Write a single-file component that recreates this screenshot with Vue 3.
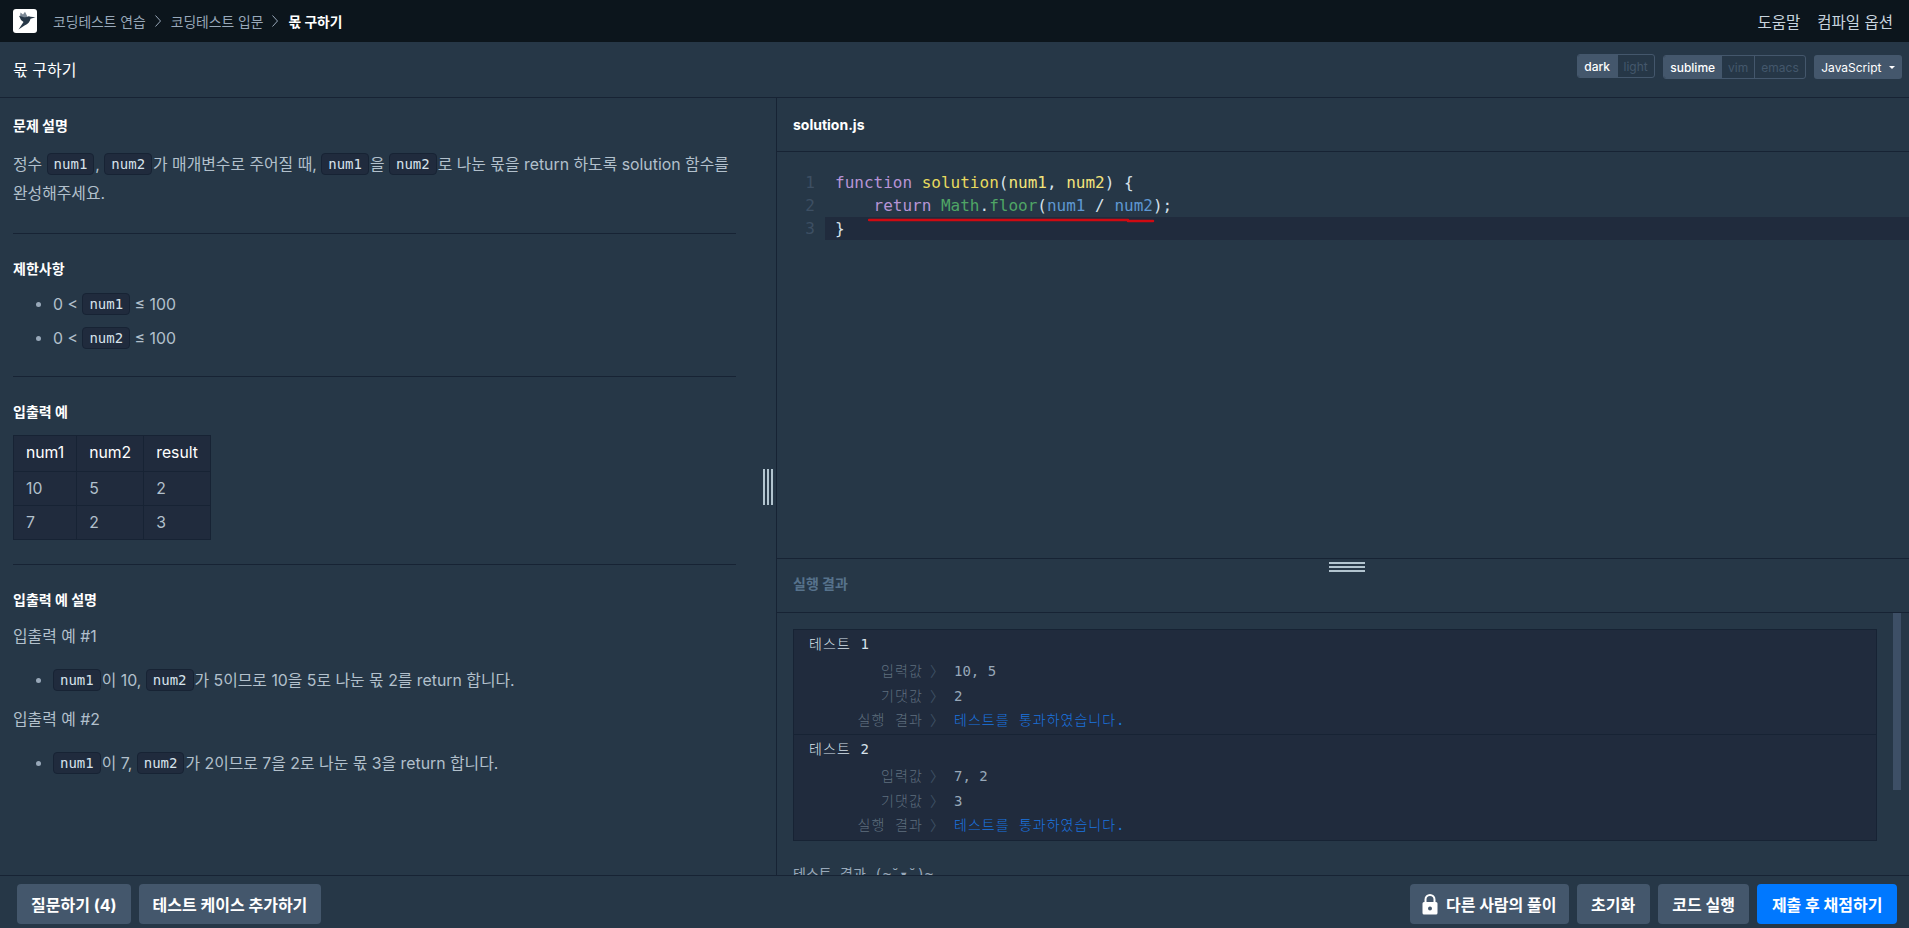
<script setup>
const tests = [
  { name: '테스트 1', input: '10, 5', expected: '2' },
  { name: '테스트 2', input: '7, 2', expected: '3' }
]
</script>

<template>
  <div class="page">
    <header class="topbar">
      <div class="crumbs">
        <span class="logo">
          <svg width="24" height="24" viewBox="0 0 24 24">
            <rect width="24" height="24" rx="3" fill="#fff" />
            <path d="M7 7.500L7.500 3.500 10 5.500 12 2.800 14.500 7.800 11 9z" fill="#7a8794" />
            <path d="M22.500 8.300L17.500 7.800C16.500 6.800 15 7 14 8L11 8.200 6 6.800 8 11 10.500 13 5.500 20.500 11.500 16.500C15 15.500 17 12.500 17.500 9.800z" fill="#263747" />
          </svg>
        </span>
        <span class="crumb">코딩테스트 연습</span>
        <svg class="sep" width="6" height="12" viewBox="0 0 6 12"><path d="M.5.500l5 5.500-5 5.500" fill="none" stroke="#98a8b9" /></svg>
        <span class="crumb">코딩테스트 입문</span>
        <svg class="sep" width="6" height="12" viewBox="0 0 6 12"><path d="M.5.500l5 5.500-5 5.500" fill="none" stroke="#98a8b9" /></svg>
        <span class="crumb current">몫 구하기</span>
      </div>
      <nav class="toplinks">
        <span>도움말</span>
        <span>컴파일 옵션</span>
      </nav>
    </header>

    <div class="titlebar">
      <h1>몫 구하기</h1>
      <div class="settings">
        <div class="seg theme">
          <span class="on">dark</span><span>light</span>
        </div>
        <div class="seg keys">
          <span class="on">sublime</span><span>vim</span><span>emacs</span>
        </div>
        <div class="lang">JavaScript<i class="caret"></i></div>
      </div>
    </div>

    <main class="workspace">
      <section class="desc">
        <h2>문제 설명</h2>
        <p class="intro">정수 <code>num1</code>, <code>num2</code>가 매개변수로 주어질 때, <code>num1</code>을 <code>num2</code>로 나눈 몫을 return 하도록 solution 함수를 완성해주세요.</p>
        <hr />
        <h2>제한사항</h2>
        <ul class="limits">
          <li>0 &lt; <code>num1</code> ≤ 100</li>
          <li>0 &lt; <code>num2</code> ≤ 100</li>
        </ul>
        <hr />
        <h2>입출력 예</h2>
        <table>
          <thead><tr><th>num1</th><th>num2</th><th>result</th></tr></thead>
          <tbody>
            <tr><td>10</td><td>5</td><td>2</td></tr>
            <tr><td>7</td><td>2</td><td>3</td></tr>
          </tbody>
        </table>
        <hr />
        <h2>입출력 예 설명</h2>
        <p class="ex">입출력 예 #1</p>
        <ul class="exlist">
          <li><code>num1</code>이 10, <code>num2</code>가 5이므로 10을 5로 나눈 몫 2를 return 합니다.</li>
        </ul>
        <p class="ex">입출력 예 #2</p>
        <ul class="exlist">
          <li><code>num1</code>이 7, <code>num2</code>가 2이므로 7을 2로 나눈 몫 3을 return 합니다.</li>
        </ul>
        <div class="vhandle"></div>
      </section>

      <section class="right">
        <div class="filebar">solution.js</div>
        <div class="editor">
          <div class="line"><span class="no">1</span><span class="src"><span class="kw">function</span> <span class="fn">solution</span>(<span class="arg">num1</span>, <span class="arg">num2</span>) {</span></div>
          <div class="line"><span class="no">2</span><span class="src">{{ '    ' }}<span class="kw">return</span> <span class="cls">Math</span>.<span class="cls">floor</span>(<span class="var">num1</span> / <span class="var">num2</span>);</span></div>
          <div class="line active"><span class="no">3</span><span class="src">}</span></div>
          <svg class="scribble" width="290" height="8" viewBox="0 0 290 8"><path d="M1 2H260M260 3H285" stroke="#cf0a12" stroke-width="2.500" stroke-linecap="round" fill="none" /></svg>
        </div>
        <div class="results">
          <div class="hhandle"></div>
          <div class="resulthead">실행 결과</div>
          <div class="output">
            <div class="testbox">
              <div v-for="t in tests" :key="t.name" class="test">
                <div class="testname">{{ t.name }}</div>
                <div class="row"><span class="lbl">입력값</span><span class="gt">〉</span><span class="val">{{ t.input }}</span></div>
                <div class="row"><span class="lbl">기댓값</span><span class="gt">〉</span><span class="val">{{ t.expected }}</span></div>
                <div class="row"><span class="lbl">실행 결과</span><span class="gt">〉</span><span class="pass">테스트를 통과하였습니다.</span></div>
              </div>
            </div>
            <div class="summary">테스트 결과 (~˘▾˘)~</div>
            <div class="scrollthumb"></div>
          </div>
        </div>
      </section>
    </main>

    <footer class="actions">
      <div class="group">
        <button>질문하기 (4)</button>
        <button>테스트 케이스 추가하기</button>
      </div>
      <div class="group endgroup">
        <button class="withicon">
          <svg width="16" height="21" viewBox="0 0 16 21">
            <path d="M3.500 9V5.500a4.500 4.500 0 0 1 9 0V9" fill="none" stroke="#fff" stroke-width="2" />
            <path d="M2 8h12a1.500 1.500 0 0 1 1.500 1.500V19a1.500 1.500 0 0 1-1.500 1.500H2A1.500 1.500 0 0 1 .500 19V9.500A1.500 1.500 0 0 1 2 8zm6 4.500a2 2 0 1 0 0 4 2 2 0 0 0 0-4z" fill="#fff" fill-rule="evenodd" />
          </svg>
          다른 사람의 풀이
        </button>
        <button>초기화</button>
        <button>코드 실행</button>
        <button class="primary">제출 후 채점하기</button>
      </div>
    </footer>
  </div>
</template>

<style>
html, body { margin: 0; padding: 0; background: #263747; overflow: hidden; }
</style>

<style scoped>
.page {
  width: 1909px;
  height: 928px;
  display: flex;
  flex-direction: column;
  overflow: hidden;
  background: #263747;
  color: #b2c0cc;
  font-family: Inter, "Noto Sans CJK KR", sans-serif;
  font-size: 16px;
}
.topbar {
  height: 42px;
  flex: none;
  box-sizing: border-box;
  background: #0c151c;
  display: flex;
  align-items: center;
  justify-content: space-between;
  padding: 0 16px 0 13px;
  font-size: 13.800px;
}
.crumbs { display: flex; align-items: center; }
.logo { display: flex; margin-right: 16px; }
.crumb { color: #98a8b9; }
.crumb.current { color: #fff; font-weight: 700; }
.sep { margin: 0 10px 0 9px; }
.toplinks { display: flex; gap: 17px; color: #c8d4de; font-size: 15.500px; }
.titlebar {
  height: 56px;
  flex: none;
  box-sizing: border-box;
  border-bottom: 1px solid #172334;
  display: flex;
  align-items: center;
  justify-content: space-between;
  padding: 0 7px 0 13px;
}
h1 { margin: -2px 0 0; font-size: 16px; font-weight: 400; color: #fff; }
.settings { display: flex; align-items: center; gap: 8px; font-size: 12px; margin-top: -5px; }
.seg {
  display: flex;
  height: 24px;
  box-sizing: border-box;
  border: 1px solid #44576c;
  border-radius: 3px;
  overflow: hidden;
  color: #44576c;
}
.seg span { padding: 0 6px; display: flex; align-items: center; border-left: 1px solid #44576c; }
.seg span:first-child { border-left: 0; }
.seg .on { background: #44576c; color: #fff; font-weight: 500; }
.theme { margin-top: -2px; }
.theme span { padding: 0 6.500px 0 6px; }
.lang {
  height: 24px;
  background: #44576c;
  color: #fff;
  border-radius: 3px;
  display: flex;
  align-items: center;
  padding: 0 7.500px;
}
.caret {
  margin-left: 7px;
  border-top: 3px solid #fff;
  border-left: 3px solid transparent;
  border-right: 3px solid transparent;
}
.workspace { flex: 1; min-height: 0; display: flex; }
.desc {
  position: relative;
  width: 777px;
  flex: none;
  box-sizing: border-box;
  border-right: 1px solid #172334;
  padding: 16px 40px 0 13px;
  font-size: 15.850px;
  line-height: 30px;
}
h2 { margin: 0; font-size: 14px; font-weight: 700; color: #fff; line-height: 24px; }
p { margin: 0; }
.intro { margin-top: 12px; line-height: 29px; }
hr { border: 0; border-top: 1px solid #172334; margin: 0; }
.intro + hr { margin-top: 25px; margin-bottom: 23px; }
.limits + hr { margin-top: 20px; margin-bottom: 23px; }
table + hr { margin-top: 24px; margin-bottom: 23px; }
ul { margin: 0; padding: 0 0 0 40px; }
.limits { margin-top: 7px; padding-left: 40px; }
.limits li { height: 34px; line-height: 34px; color: #b2c0cc; }
li::marker { color: #98a8b9; }
code {
  display: inline-block;
  box-sizing: border-box;
  height: 22px;
  line-height: 20px;
  padding: 0 6px;
  background: #202b3d;
  border: 1px solid #172334;
  border-radius: 4px;
  color: #d7e2eb;
  font-family: "DejaVu Sans Mono", monospace;
  font-size: 14px;
  vertical-align: 1px;
}
.intro code, .exlist code { margin-right: 1px; }
table {
  margin-top: 11px;
  border-collapse: collapse;
  background: #202b3d;
  font-size: 15.750px;
  line-height: 20px;
}
th, td { border: 1px solid #172334; padding: 0 12px; text-align: left; height: 34px; font-weight: 400; box-sizing: border-box; }
th { color: #fff; height: 36px; padding-bottom: 2px; }
td { color: #b2c0cc; }
.ex { margin-top: 10px; line-height: 30px; }
.exlist { margin: 14px 0 0; }
.exlist + .ex { margin-top: 9px; }
.exlist li { line-height: 30px; }
.vhandle {
  position: absolute;
  right: 3px;
  top: 371px;
  width: 10px;
  height: 36px;
  background: repeating-linear-gradient(90deg, #b2c4cf 0 2px, transparent 2px 4px);
}
.right { flex: 1; min-width: 0; display: flex; flex-direction: column; }
.filebar {
  height: 54px;
  flex: none;
  box-sizing: border-box;
  border-bottom: 1px solid #172334;
  display: flex;
  align-items: center;
  padding-left: 16px;
  font-size: 14px;
  font-weight: 700;
  color: #fff;
}
.editor {
  position: relative;
  height: 406px;
  flex: none;
  box-sizing: border-box;
  padding-top: 19px;
  font-family: "DejaVu Sans Mono", monospace;
  font-size: 16px;
  line-height: 23px;
  color: #d7e2eb;
}
.line { display: flex; white-space: pre; }
.no { width: 48px; box-sizing: border-box; padding-right: 10px; text-align: right; color: #3d4f63; flex: none; }
.src { flex: 1; padding-left: 10px; }
.active .src { background: #202b3d; }
.kw { color: #b794d6; }
.fn { color: #e8da5e; }
.arg { color: #f3e37a; }
.cls { color: #4fa565; }
.var { color: #5f97d2; }
.scribble { position: absolute; left: 91px; top: 66px; }
.results { flex: 1; min-height: 0; display: flex; flex-direction: column; position: relative; border-top: 1px solid #172334; }
.hhandle {
  position: absolute;
  left: 552px;
  top: 3px;
  width: 36px;
  height: 10px;
  background: repeating-linear-gradient(180deg, #b2c4cf 0 2px, transparent 2px 4px);
}
.resulthead {
  height: 54px;
  flex: none;
  box-sizing: border-box;
  border-bottom: 1px solid #172334;
  display: flex;
  align-items: center;
  padding: 0 0 5px 16px;
  font-size: 14px;
  font-weight: 700;
  color: #56728c;
}
.output {
  position: relative;
  flex: 1;
  min-height: 0;
  overflow: hidden;
  padding: 16px 32px 0 16px;
  font-family: "DejaVu Sans Mono", "Noto Sans CJK KR", monospace;
  font-size: 14px;
}
.testbox { background: #202b3d; border: 1px solid #172334; }
.test { height: 104px; padding-top: 1px; box-sizing: border-box; }
.test + .test { border-top: 1px solid #172334; height: 106px; }
.testname { height: 28px; line-height: 26px; padding-left: 15px; color: #d7e2eb; letter-spacing: 1.100px; font-weight: 300; }
.row { display: flex; height: 24.700px; line-height: 24.700px; color: #98a8b9; }
.lbl { width: 129px; text-align: right; color: #5f6f7f; flex: none; letter-spacing: 1.100px; font-weight: 300; }
.gt { width: 31px; box-sizing: border-box; padding-left: 7px; color: #3d4f63; flex: none; }
.pass { color: #1a75e0; letter-spacing: 1px; font-weight: 300; }
.summary { margin-top: 23px; line-height: 20px; color: #98a8b9; }
.scrollthumb { position: absolute; right: 8px; top: 0; width: 8px; height: 177px; background: #3d4f66; }
.actions {
  height: 53px;
  flex: none;
  box-sizing: border-box;
  border-top: 1px solid #172334;
  display: flex;
  align-items: flex-start;
  justify-content: space-between;
  padding: 8px 12px 0 17px;
}
.group { display: flex; gap: 8px; }
button {
  height: 40px;
  border: 0;
  border-radius: 4px;
  background: #44576c;
  color: #fff;
  padding: 0 14px;
  font-family: Inter, "Noto Sans CJK KR", sans-serif;
  font-size: 16px;
  font-weight: 700;
  display: flex;
  align-items: center;
  gap: 8px;
}
.endgroup button { padding: 0 14.500px; }
.endgroup .withicon { padding: 0 12px; }
.primary { background: #0078ff; }
</style>
